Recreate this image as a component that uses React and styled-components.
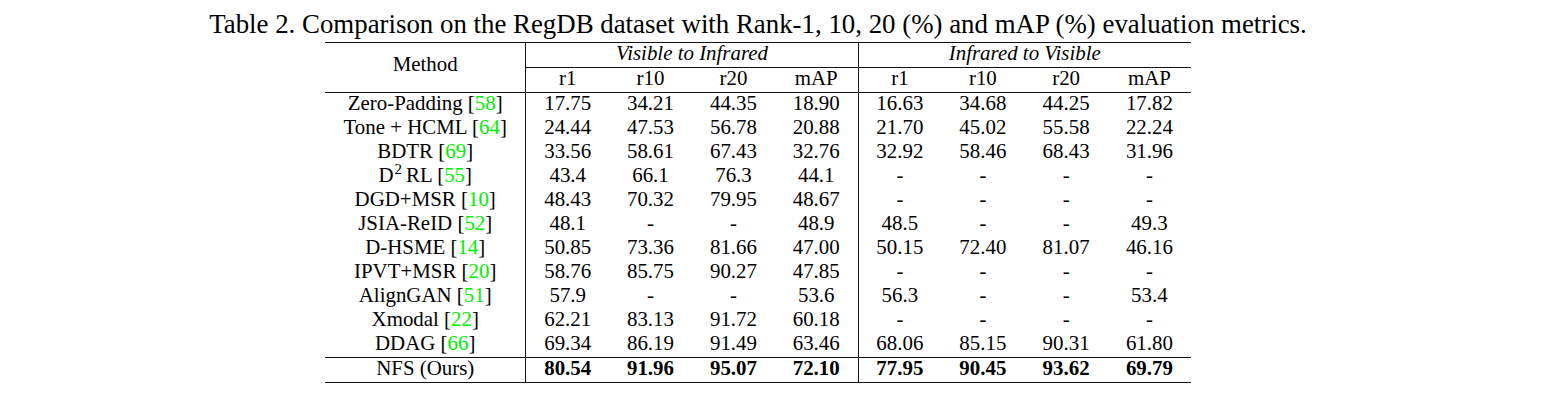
import React from "react";
import styled, { createGlobalStyle } from "styled-components";

const Global = createGlobalStyle`
  html, body { margin: 0; padding: 0; background: #fff; }
  body { font-family: "Liberation Serif", "Times New Roman", serif; color: #000; }
  table { font-family: "Liberation Serif", "Times New Roman", serif; }
`;

const Page = styled.div`
  width: 1558px;
  height: 401px;
  display: flex;
  flex-direction: column;
  align-items: center;
  padding-right: 42px;
  box-sizing: border-box;
`;

const Caption = styled.div`
  font-size: 26.85px;
  line-height: 30px;
  margin-top: 9px;
  white-space: nowrap;
`;

const Table = styled.table`
  margin-top: 3px;
  border-collapse: collapse;
  table-layout: fixed;
  width: 866px;
  font-family: "Liberation Serif", "Times New Roman", serif;
  font-size: 20.9px;
  color: #000;
  border-top: 1px solid #111;
  border-bottom: 1px solid #111;
`;

const Cell = styled.td`
  padding: 0 0 ${(p) => (p.$lift ? "8px" : "4px")} 0;
  height: 20px;
  line-height: 20px;
  text-align: center;
  white-space: nowrap;
  font-weight: ${(p) => (p.$bold ? 700 : 400)};
  font-style: ${(p) => (p.$italic ? "italic" : "normal")};
  border-right: ${(p) => (p.$divider ? "1px solid #111" : "none")};
  border-bottom: ${(p) => (p.$under ? "1px solid #111" : "none")};
  border-top: ${(p) => (p.$over ? "1px solid #111" : "none")};
  vertical-align: middle;
`;

const Cite = styled.span`
  color: #00f000;
`;

const Sup = styled.sup`
  font-size: 15px;
  line-height: 0;
  vertical-align: 8px;
  margin: 0 4px 0 1px;
`;

const rows = [
  [<>Zero-Padding [<Cite>58</Cite>]</>, ["17.75", "34.21", "44.35", "18.90"], ["16.63", "34.68", "44.25", "17.82"]],
  [<>Tone + HCML [<Cite>64</Cite>]</>, ["24.44", "47.53", "56.78", "20.88"], ["21.70", "45.02", "55.58", "22.24"]],
  [<>BDTR [<Cite>69</Cite>]</>, ["33.56", "58.61", "67.43", "32.76"], ["32.92", "58.46", "68.43", "31.96"]],
  [<>D<Sup>2</Sup>RL [<Cite>55</Cite>]</>, ["43.4", "66.1", "76.3", "44.1"], ["-", "-", "-", "-"]],
  [<>DGD+MSR [<Cite>10</Cite>]</>, ["48.43", "70.32", "79.95", "48.67"], ["-", "-", "-", "-"]],
  [<>JSIA-ReID [<Cite>52</Cite>]</>, ["48.1", "-", "-", "48.9"], ["48.5", "-", "-", "49.3"]],
  [<>D-HSME [<Cite>14</Cite>]</>, ["50.85", "73.36", "81.66", "47.00"], ["50.15", "72.40", "81.07", "46.16"]],
  [<>IPVT+MSR [<Cite>20</Cite>]</>, ["58.76", "85.75", "90.27", "47.85"], ["-", "-", "-", "-"]],
  [<>AlignGAN [<Cite>51</Cite>]</>, ["57.9", "-", "-", "53.6"], ["56.3", "-", "-", "53.4"]],
  [<>Xmodal [<Cite>22</Cite>]</>, ["62.21", "83.13", "91.72", "60.18"], ["-", "-", "-", "-"]],
  [<>DDAG [<Cite>66</Cite>]</>, ["69.34", "86.19", "91.49", "63.46"], ["68.06", "85.15", "90.31", "61.80"]],
];

const ours = [["80.54", "91.96", "95.07", "72.10"], ["77.95", "90.45", "93.62", "69.79"]];
const metrics = ["r1", "r10", "r20", "mAP"];

function DataRow({ name, v2i, i2v, bold, over }) {
  return (
    <tr>
      <Cell $divider $over={over}>{name}</Cell>
      {v2i.map((v, i) => (
        <Cell key={"a" + i} $bold={bold} $over={over} $divider={i === 3}>{v}</Cell>
      ))}
      {i2v.map((v, i) => (
        <Cell key={"b" + i} $bold={bold} $over={over}>{v}</Cell>
      ))}
    </tr>
  );
}

export default function App() {
  return (
    <>
      <Global />
      <Page>
        <Caption>
          Table 2. Comparison on the RegDB dataset with Rank-1, 10, 20 (%) and mAP (%) evaluation metrics.
        </Caption>
        <Table>
          <colgroup>
            <col style={{ width: "201px" }} />
            {Array.from({ length: 8 }).map((_, i) => (
              <col key={i} style={{ width: i < 4 ? "83px" : "83.25px" }} />
            ))}
          </colgroup>
          <tbody>
            <tr>
              <Cell rowSpan={2} $divider $under $lift>Method</Cell>
              <Cell colSpan={4} $italic $divider $under>Visible to Infrared</Cell>
              <Cell colSpan={4} $italic $under>Infrared to Visible</Cell>
            </tr>
            <tr>
              {metrics.map((m, i) => (
                <Cell key={"h1" + i} $under $divider={i === 3}>{m}</Cell>
              ))}
              {metrics.map((m, i) => (
                <Cell key={"h2" + i} $under>{m}</Cell>
              ))}
            </tr>
            {rows.map(([name, a, b], i) => (
              <DataRow key={i} name={name} v2i={a} i2v={b} />
            ))}
            <DataRow name="NFS (Ours)" v2i={ours[0]} i2v={ours[1]} bold over />
          </tbody>
        </Table>
      </Page>
    </>
  );
}
